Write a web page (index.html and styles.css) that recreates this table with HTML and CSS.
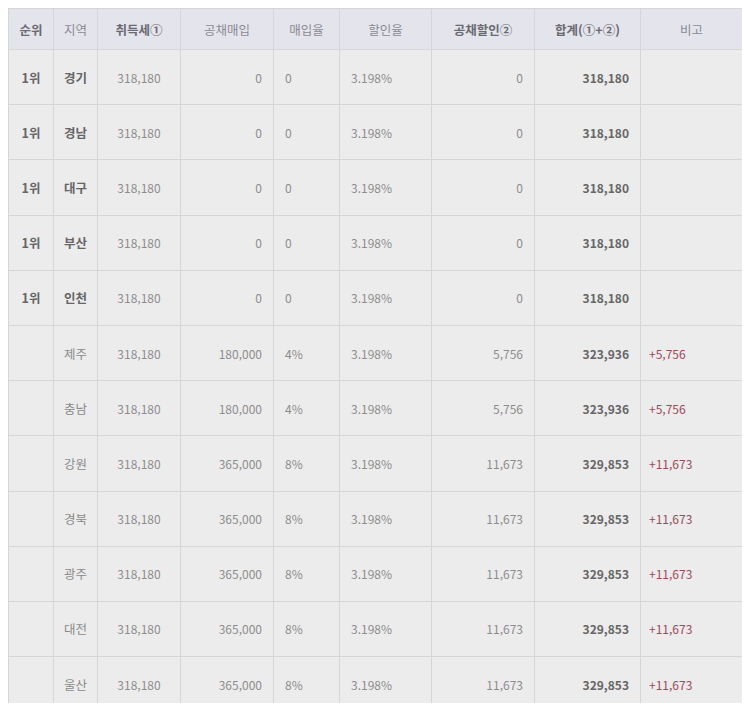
FILE: index.html
```html
<!DOCTYPE html>
<html lang="ko">
<head>
<meta charset="utf-8">
<title>공채할인 비교</title>
<link rel="stylesheet" href="styles.css">
</head>
<body>
<div class="wrap">
<table class="tbl">
<colgroup>
<col class="c1"><col class="c2"><col class="c3"><col class="c4"><col class="c5"><col class="c6"><col class="c7"><col class="c8"><col class="c9">
</colgroup>
<thead>
<tr>
<th class="b">순위</th><th>지역</th><th class="b">취득세①</th><th>공채매입</th><th>매입율</th><th>할인율</th><th class="b">공채할인②</th><th class="b">합계(①+②)</th><th>비고</th>
</tr>
</thead>
<tbody>
<tr><td class="rank">1위</td><td class="reg b">경기</td><td class="ctr">318,180</td><td class="r">0</td><td class="l">0</td><td class="l">3.198%</td><td class="r">0</td><td class="r sum">318,180</td><td class="note"></td></tr>
<tr><td class="rank">1위</td><td class="reg b">경남</td><td class="ctr">318,180</td><td class="r">0</td><td class="l">0</td><td class="l">3.198%</td><td class="r">0</td><td class="r sum">318,180</td><td class="note"></td></tr>
<tr><td class="rank">1위</td><td class="reg b">대구</td><td class="ctr">318,180</td><td class="r">0</td><td class="l">0</td><td class="l">3.198%</td><td class="r">0</td><td class="r sum">318,180</td><td class="note"></td></tr>
<tr><td class="rank">1위</td><td class="reg b">부산</td><td class="ctr">318,180</td><td class="r">0</td><td class="l">0</td><td class="l">3.198%</td><td class="r">0</td><td class="r sum">318,180</td><td class="note"></td></tr>
<tr><td class="rank">1위</td><td class="reg b">인천</td><td class="ctr">318,180</td><td class="r">0</td><td class="l">0</td><td class="l">3.198%</td><td class="r">0</td><td class="r sum">318,180</td><td class="note"></td></tr>
<tr><td class="rank"></td><td class="reg">제주</td><td class="ctr">318,180</td><td class="r">180,000</td><td class="l">4%</td><td class="l">3.198%</td><td class="r">5,756</td><td class="r sum">323,936</td><td class="note">+5,756</td></tr>
<tr><td class="rank"></td><td class="reg">충남</td><td class="ctr">318,180</td><td class="r">180,000</td><td class="l">4%</td><td class="l">3.198%</td><td class="r">5,756</td><td class="r sum">323,936</td><td class="note">+5,756</td></tr>
<tr><td class="rank"></td><td class="reg">강원</td><td class="ctr">318,180</td><td class="r">365,000</td><td class="l">8%</td><td class="l">3.198%</td><td class="r">11,673</td><td class="r sum">329,853</td><td class="note">+11,673</td></tr>
<tr><td class="rank"></td><td class="reg">경북</td><td class="ctr">318,180</td><td class="r">365,000</td><td class="l">8%</td><td class="l">3.198%</td><td class="r">11,673</td><td class="r sum">329,853</td><td class="note">+11,673</td></tr>
<tr><td class="rank"></td><td class="reg">광주</td><td class="ctr">318,180</td><td class="r">365,000</td><td class="l">8%</td><td class="l">3.198%</td><td class="r">11,673</td><td class="r sum">329,853</td><td class="note">+11,673</td></tr>
<tr><td class="rank"></td><td class="reg">대전</td><td class="ctr">318,180</td><td class="r">365,000</td><td class="l">8%</td><td class="l">3.198%</td><td class="r">11,673</td><td class="r sum">329,853</td><td class="note">+11,673</td></tr>
<tr><td class="rank"></td><td class="reg">울산</td><td class="ctr">318,180</td><td class="r">365,000</td><td class="l">8%</td><td class="l">3.198%</td><td class="r">11,673</td><td class="r sum">329,853</td><td class="note">+11,673</td></tr>
</tbody>
</table>
</div>
</body>
</html>
```
FILE: styles.css
```css
html, body {
  margin: 0;
  padding: 0;
  background: #ffffff;
}
body {
  padding: 8px 8px 0 8px;
  font-family: "Noto Sans CJK KR", "Noto Sans", sans-serif;
}
.wrap {
  height: 695px;
  overflow: hidden;
}
.tbl {
  width: 100%;
  table-layout: fixed;
  border-collapse: collapse;
  font-size: 12px;
  color: #8c8c8c;
}
.c1 { width: 45px; }
.c2 { width: 44px; }
.c3 { width: 83px; }
.c4 { width: 93px; }
.c5 { width: 66px; }
.c6 { width: 92px; }
.c7 { width: 103px; }
.c8 { width: 106px; }
.c9 { width: 102px; }
.tbl th, .tbl td {
  border: 1px solid #d6d6d6;
  padding: 0;
  white-space: nowrap;
}
.tbl th {
  background: #e4e4ec;
  height: 40px;
  font-weight: normal;
  font-size: 12.5px;
  color: #8a8a92;
  text-align: center;
}
.tbl th.b {
  font-weight: bold;
  color: #6a6a70;
}
.tbl td {
  background: #ececec;
  height: 54.2px;
}
.rank {
  text-align: center;
  font-weight: bold;
  color: #666666;
  font-size: 12.5px;
}
.reg {
  text-align: center;
  font-size: 12.5px;
  color: #8a8a8a;
}
.reg.b {
  font-weight: bold;
  color: #666666;
}
.ctr { text-align: center; }
.r { text-align: right; padding-right: 11px !important; }
.l { text-align: left; padding-left: 11px !important; }
.sum {
  font-weight: bold;
  color: #666666;
}
.note {
  text-align: left;
  padding-left: 8px !important;
  color: #9a4a58;
}
```
